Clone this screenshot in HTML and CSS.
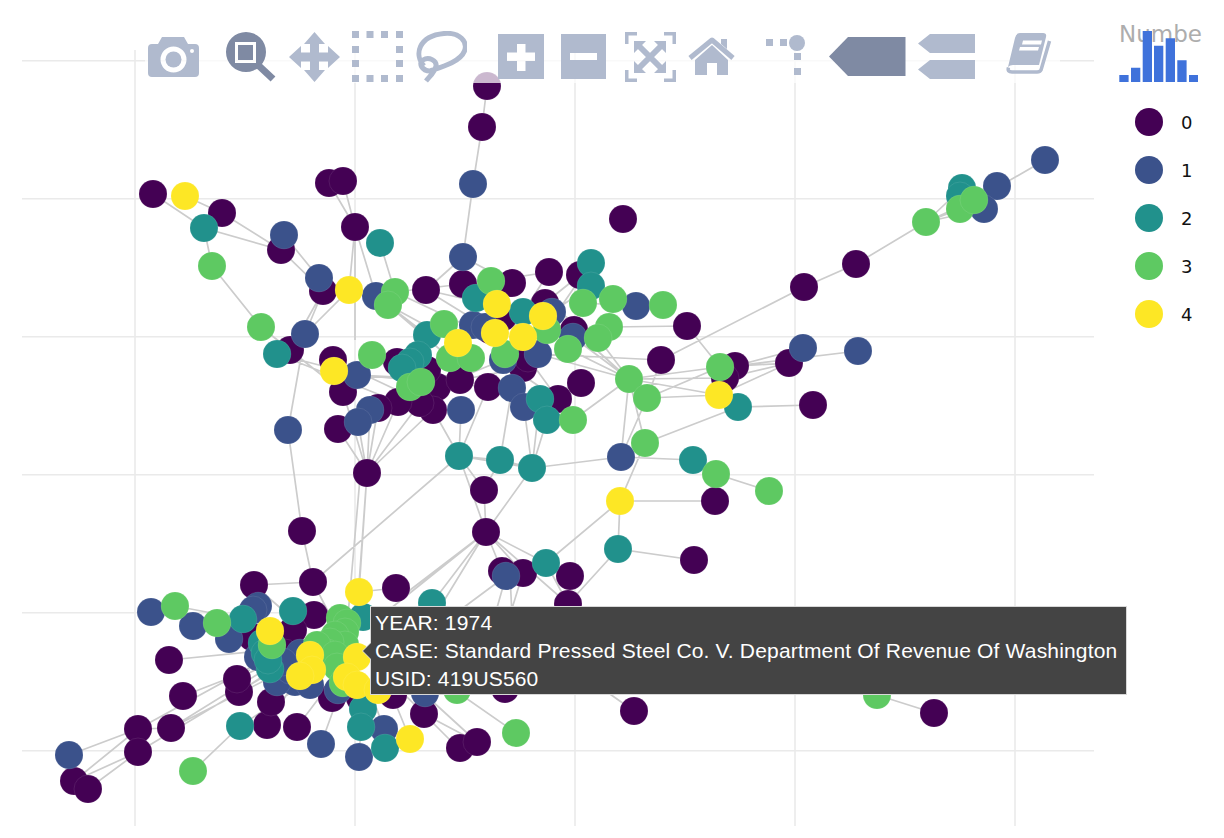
FILE: index.html
```html
<!DOCTYPE html>
<html lang="en">
<head>
<meta charset="utf-8">
<title>Case citation network</title>
<link rel="stylesheet" href="styles.css">
</head>
<body>
<div class="page">
  <main class="plot">
    <svg class="chart" width="1104" height="838" viewBox="0 0 1104 838">
      <path class="grid" d="M22 60.700H1094M22 198.700H1094M22 336.700H1094M22 474.700H1094M22 612.700H1094M22 750.700H1094M135 50V826M355 50V826M575 50V826M795 50V826M1015 50V826"/>
      <path class="edges" d="M487 86L482 127L473 184L463 257L426 290M463 257L463 284M153 194L204 228L281 250M222 213L281 250M185 196L222 213M204 228L212 266M212 266L261 327M281 250L323 291L305 334M319 278L349 290L305 334M284 235L319 278M329 183L355 227M343 181L355 227L376 296M355 227L349 290M355 227L355 340M380 243L395 292M261 327L290 350M305 334L288 430L302 531L313 582M323 291L290 350M277 354L357 375M290 350L343 392M277 354L398 402M372 355L343 392M333 360L418 400M357 375L460 380M357 375L488 387M372 355L460 380M367 473L338 429M367 473L358 422M367 473L370 410M367 473L378 408M367 473L398 402M367 473L420 403M367 473L433 410M367 473L343 392M367 473L359 592M367 473L355 640M360 478L345 650M426 290L491 330M426 290L523 312M395 292L476 330M388 305L427 335M388 305L458 343M388 305L450 358M395 292L463 284M463 257L512 283M463 284L512 283M491 281L549 272M549 272L512 330M580 275L545 303M591 263L545 330M591 286L552 312M583 303L636 306M613 299L663 305M609 327L687 326M574 330L609 327M545 303L598 338M574 330L629 379M598 338L629 379M568 349L629 379M538 354L661 360M538 354L629 379M661 360L804 287L856 264L926 222L960 209L1045 160M926 222L962 188M926 222L984 209M926 222L974 200M687 326L720 367M661 360L647 398M629 379L720 367M629 379L725 378M629 379L719 395M647 398L719 395M647 398L720 367M573 420L629 379M719 395L789 363M735 366L858 351M735 366L803 348M725 378L789 363M720 367L789 363M738 407L813 405M719 395L738 407M645 443L738 407M629 379L645 443M647 398L621 457M629 379L621 457M621 457L645 443M621 457L693 460L716 474L769 491M645 443L620 501L715 501M620 501L618 549L694 560M618 549L568 604M620 501L546 563M433 410L459 456M461 410L459 456M488 387L459 456M459 456L500 460L532 468L621 457M459 456L532 468M512 388L500 460M524 407L532 468M540 399L532 468M547 420L532 468M484 490L459 456M484 490L500 460M486 532L484 490M486 532L532 468M486 532L459 456M459 456L313 582M486 532L397 600M486 532L370 625M486 532L432 603M486 532L420 640M486 532L523 573M486 532L502 571M486 532L546 563M486 532L568 604M510 576L512 615M506 576L440 625M506 576L495 615M523 573L510 615M570 576L568 604M546 563L568 604M396 588L359 592M313 582L254 585M313 582L335 625M254 585L300 625M314 615L293 611M151 612L300 630M175 606L243 619M217 623L300 640M169 660L270 650M183 696L250 670M239 692L310 645M237 679L315 640M138 729L300 640M171 728L300 648M138 752L300 655M171 728L305 660M69 755L138 729M74 781L138 752M88 789L138 752M74 781L138 729M138 729L171 728M193 771L240 726M240 726L310 680M267 725L271 702M267 725L295 682M297 727L325 690M321 744L337 700M361 727L359 757M384 729L370 690M410 739L390 690M458 748L400 690M477 742L420 690M516 733L440 680M424 714L458 748M424 714L477 742M634 711L590 680M877 695L934 713M500 360L558 399M581 383L540 399M558 399L528 358M523 368L460 380M437 387L503 360M573 337L629 379M538 354L512 388"/>
      <g class="nodes c0">
        <circle cx="487" cy="86"/><circle cx="482" cy="127"/><circle cx="153" cy="194"/><circle cx="222" cy="213"/><circle cx="329" cy="183"/><circle cx="343" cy="181"/><circle cx="355" cy="227"/><circle cx="281" cy="250"/><circle cx="623" cy="219"/><circle cx="856" cy="264"/><circle cx="804" cy="287"/><circle cx="323" cy="291"/><circle cx="426" cy="290"/><circle cx="463" cy="284"/><circle cx="512" cy="283"/><circle cx="549" cy="272"/><circle cx="580" cy="275"/><circle cx="545" cy="303"/><circle cx="574" cy="330"/><circle cx="687" cy="326"/><circle cx="661" cy="360"/><circle cx="789" cy="363"/><circle cx="735" cy="366"/><circle cx="725" cy="378"/><circle cx="813" cy="405"/><circle cx="290" cy="350"/><circle cx="333" cy="360"/><circle cx="343" cy="392"/><circle cx="397" cy="362"/><circle cx="420" cy="377"/><circle cx="437" cy="387"/><circle cx="460" cy="380"/><circle cx="488" cy="387"/><circle cx="581" cy="383"/><circle cx="558" cy="399"/><circle cx="433" cy="410"/><circle cx="420" cy="403"/><circle cx="398" cy="402"/><circle cx="378" cy="408"/><circle cx="338" cy="429"/><circle cx="367" cy="473"/><circle cx="523" cy="368"/><circle cx="528" cy="358"/><circle cx="484" cy="490"/><circle cx="715" cy="501"/><circle cx="486" cy="532"/><circle cx="302" cy="531"/><circle cx="694" cy="560"/><circle cx="523" cy="573"/><circle cx="502" cy="571"/><circle cx="570" cy="576"/><circle cx="568" cy="604"/><circle cx="396" cy="588"/><circle cx="313" cy="582"/><circle cx="254" cy="585"/><circle cx="314" cy="615"/><circle cx="293" cy="630"/><circle cx="252" cy="637"/><circle cx="285" cy="653"/><circle cx="169" cy="660"/><circle cx="183" cy="696"/><circle cx="239" cy="692"/><circle cx="237" cy="679"/><circle cx="138" cy="729"/><circle cx="171" cy="728"/><circle cx="138" cy="752"/><circle cx="74" cy="781"/><circle cx="88" cy="789"/><circle cx="267" cy="725"/><circle cx="297" cy="727"/><circle cx="271" cy="702"/><circle cx="332" cy="698"/><circle cx="360" cy="698"/><circle cx="393" cy="695"/><circle cx="424" cy="714"/><circle cx="505" cy="689"/><circle cx="460" cy="748"/><circle cx="477" cy="742"/><circle cx="634" cy="711"/><circle cx="934" cy="713"/><circle cx="503" cy="317"/><circle cx="490" cy="330"/><circle cx="427" cy="370"/>
      </g>
      <g class="nodes c1">
        <circle cx="1045" cy="160"/><circle cx="997" cy="186"/><circle cx="984" cy="209"/><circle cx="473" cy="184"/><circle cx="284" cy="235"/><circle cx="463" cy="257"/><circle cx="319" cy="278"/><circle cx="376" cy="296"/><circle cx="305" cy="334"/><circle cx="636" cy="306"/><circle cx="552" cy="312"/><circle cx="573" cy="337"/><circle cx="803" cy="348"/><circle cx="858" cy="351"/><circle cx="538" cy="354"/><circle cx="503" cy="360"/><circle cx="512" cy="388"/><circle cx="524" cy="407"/><circle cx="461" cy="410"/><circle cx="370" cy="410"/><circle cx="358" cy="422"/><circle cx="288" cy="430"/><circle cx="357" cy="375"/><circle cx="473" cy="325"/><circle cx="485" cy="327"/><circle cx="621" cy="457"/><circle cx="506" cy="576"/><circle cx="151" cy="612"/><circle cx="193" cy="626"/><circle cx="258" cy="606"/><circle cx="253" cy="610"/><circle cx="229" cy="639"/><circle cx="258" cy="657"/><circle cx="300" cy="653"/><circle cx="295" cy="682"/><circle cx="277" cy="682"/><circle cx="290" cy="670"/><circle cx="283" cy="662"/><circle cx="310" cy="685"/><circle cx="338" cy="690"/><circle cx="425" cy="693"/><circle cx="384" cy="729"/><circle cx="321" cy="744"/><circle cx="359" cy="757"/><circle cx="69" cy="755"/>
      </g>
      <g class="nodes c2">
        <circle cx="962" cy="188"/><circle cx="960" cy="196"/><circle cx="204" cy="228"/><circle cx="380" cy="243"/><circle cx="591" cy="263"/><circle cx="591" cy="286"/><circle cx="476" cy="298"/><circle cx="523" cy="312"/><circle cx="427" cy="335"/><circle cx="277" cy="354"/><circle cx="418" cy="355"/><circle cx="410" cy="362"/><circle cx="402" cy="368"/><circle cx="540" cy="399"/><circle cx="547" cy="420"/><circle cx="738" cy="407"/><circle cx="459" cy="456"/><circle cx="500" cy="460"/><circle cx="532" cy="468"/><circle cx="693" cy="460"/><circle cx="618" cy="549"/><circle cx="546" cy="563"/><circle cx="432" cy="603"/><circle cx="243" cy="619"/><circle cx="293" cy="611"/><circle cx="270" cy="669"/><circle cx="262" cy="643"/><circle cx="265" cy="653"/><circle cx="268" cy="660"/><circle cx="363" cy="617"/><circle cx="363" cy="709"/><circle cx="361" cy="727"/><circle cx="240" cy="726"/><circle cx="385" cy="748"/>
      </g>
      <g class="nodes c3">
        <circle cx="926" cy="222"/><circle cx="960" cy="209"/><circle cx="974" cy="200"/><circle cx="212" cy="266"/><circle cx="261" cy="327"/><circle cx="372" cy="355"/><circle cx="395" cy="292"/><circle cx="388" cy="305"/><circle cx="491" cy="281"/><circle cx="444" cy="324"/><circle cx="583" cy="303"/><circle cx="613" cy="299"/><circle cx="663" cy="305"/><circle cx="609" cy="327"/><circle cx="598" cy="338"/><circle cx="568" cy="349"/><circle cx="450" cy="358"/><circle cx="471" cy="358"/><circle cx="505" cy="354"/><circle cx="547" cy="330"/><circle cx="410" cy="387"/><circle cx="421" cy="382"/><circle cx="629" cy="379"/><circle cx="720" cy="367"/><circle cx="647" cy="398"/><circle cx="573" cy="420"/><circle cx="645" cy="443"/><circle cx="716" cy="474"/><circle cx="769" cy="491"/><circle cx="877" cy="695"/><circle cx="516" cy="733"/><circle cx="193" cy="771"/><circle cx="175" cy="606"/><circle cx="217" cy="623"/><circle cx="272" cy="645"/><circle cx="340" cy="618"/><circle cx="347" cy="623"/><circle cx="345" cy="632"/><circle cx="335" cy="635"/><circle cx="345" cy="645"/><circle cx="330" cy="642"/><circle cx="327" cy="653"/><circle cx="317" cy="645"/><circle cx="335" cy="655"/><circle cx="337" cy="667"/><circle cx="343" cy="683"/><circle cx="457" cy="690"/>
      </g>
      <g class="nodes c4">
        <circle cx="185" cy="196"/><circle cx="349" cy="290"/><circle cx="497" cy="304"/><circle cx="543" cy="316"/><circle cx="495" cy="333"/><circle cx="523" cy="337"/><circle cx="458" cy="343"/><circle cx="334" cy="371"/><circle cx="719" cy="395"/><circle cx="620" cy="501"/><circle cx="359" cy="592"/><circle cx="270" cy="631"/><circle cx="310" cy="655"/><circle cx="312" cy="670"/><circle cx="300" cy="676"/><circle cx="357" cy="657"/><circle cx="347" cy="677"/><circle cx="357" cy="685"/><circle cx="378" cy="690"/><circle cx="410" cy="739"/>
      </g>
    </svg>

    <nav class="modebar" aria-label="Plot tools">
      <svg class="tool" width="51" height="52" viewBox="148 31 51 52"><path fill-rule="evenodd" d="M162 37H184L188 44H195Q199 44 199 48V73Q199 77 195 77H152Q148 77 148 73V48Q148 44 152 44H158ZM173.5 46.500A13 13 0 1 0 173.500 72.500A13 13 0 1 0 173.500 46.500ZM192 49A2 2 0 1 0 192 53A2 2 0 1 0 192 49Z"/><circle cx="173.500" cy="59.500" r="8"/></svg>
      <svg class="tool tool-on tool-zoom" width="51" height="52" viewBox="225 31 51 52"><path fill-rule="evenodd" d="M246 32A20 20 0 1 0 246 72A20 20 0 1 0 246 32ZM235 42H256V63H235Z"/><rect x="238" y="45" width="15" height="15"/><path class="tool-line tool-line-on" d="M258 65L273 79"/></svg>
      <svg class="tool tool-pan" width="51" height="52" viewBox="289 31 51 52"><path d="M314.500 32L325 44H319V52.500H328V46L340 57L328 68V61.500H319V70H325L314.500 82L304 70H310V61.500H301V68L289 57L301 46V52.500H310V44H304Z"/></svg>
      <svg class="tool tool-select" width="52" height="52" viewBox="351 31 52 52"><path d="M352 31h7v7h-7zM366.500 31h7v7h-7zM381 31h7v7h-7zM396 31h7v7h-7zM352 46h7v7h-7zM396 46h7v7h-7zM352 60h7v7h-7zM396 60h7v7h-7zM352 75h7v7h-7zM366.500 75h7v7h-7zM381 75h7v7h-7zM396 75h7v7h-7z"/></svg>
      <svg class="tool tool-lasso" width="52" height="52" viewBox="415 31 52 52"><path class="tool-line tool-line-thin" d="M424 66C414 55 418 36 444 33.500C460 32 468 42 464.500 51C460 62 442 67 430 71C422 71 418 63 423 60C429 56 437 61 436 66C435 72 430 76 426 81"/></svg>
      <svg class="tool tool-plus" width="46" height="52" viewBox="498 31 46 52"><path fill-rule="evenodd" d="M498 34H544V79H498ZM517 44V52.500H507V61H517V71H525.500V61H535V52.500H525.500V44Z"/></svg>
      <svg class="tool tool-minus" width="45" height="52" viewBox="561 31 45 52"><path fill-rule="evenodd" d="M561 34H606V79H561ZM570 53V60H597V53Z"/></svg>
      <svg class="tool tool-auto" width="52" height="52" viewBox="624 31 52 52"><path d="M625 32H637V35.500H628.500V44H625ZM676 32H664V35.500H672.500V44H676ZM625 82H637V78.500H628.500V70H625ZM676 82H664V78.500H672.500V70H676ZM634 41H646L634 53ZM666 41H654L666 53ZM634 73H646L634 61ZM666 73H654L666 61Z"/><path class="tool-line tool-line-wide" d="M638 45L662 69M662 45L638 69"/></svg>
      <svg class="tool tool-home" width="47" height="52" viewBox="688 31 47 52"><path d="M721 39H727V49L721 44ZM695 60L712 45L728 60V75H717V63H707V75H695Z"/><path class="tool-line tool-line-thin" d="M690 58L712 40L733 58"/></svg>
      <svg class="tool tool-spike" width="41" height="52" viewBox="765 31 41 52"><path d="M766 39h7v7h-7zM780 39h7v7h-7zM794 53h7v7h-7zM794 68h7v7h-7z"/><circle cx="797" cy="43" r="8"/></svg>
      <svg class="tool tool-on tool-closest" width="77" height="52" viewBox="829 31 77 52"><path d="M829 56.500L848 37H905.500V76H848Z"/></svg>
      <svg class="tool" width="57" height="52" viewBox="918 31 57 52"><path d="M918 43.500L930 34H975V53H930ZM918 69.500L930 60H975V79H930Z"/></svg>
      <svg class="tool tool-book" width="46" height="52" viewBox="1006 31 46 52"><path fill-rule="evenodd" d="M1020 33H1043Q1047 33 1046 37L1039 65H1013Q1010 65 1008 67L1015 38Q1016 33 1020 33ZM1023 40.500L1022 44.500H1041L1042 40.500ZM1020 47L1019 50.500H1038L1039 47Z"/><path class="tool-line tool-line-book" d="M1049.500 41L1041 70Q1040 72 1037 72H1012Q1007 72 1008.500 67.500"/></svg>
    </nav>

    <aside class="hover">
      <p class="hover-line">YEAR: 1974</p>
      <p class="hover-line">CASE: Standard Pressed Steel Co. V. Department Of Revenue Of Washington</p>
      <p class="hover-line">USID: 419US560</p>
    </aside>
  </main>

  <section class="legend">
    <div class="legend-head">
      <div class="legend-title">Number</div>
      <svg class="legend-bars" width="79" height="52" viewBox="1119 30 79 52"><path d="M1119.300 75h9.300v7h-9.300zM1131 67.700h9.300v14.300h-9.300zM1142.700 31h9.300v51h-9.300zM1154 45.700h9.300v36.300h-9.300zM1165.700 38.300h9.300v43.700h-9.300zM1177.300 60.300h9.300v21.700h-9.300zM1189 75h9.300v7h-9.300z"/></svg>
    </div>
    <ul class="legend-list">
      <li class="legend-item"><span class="dot d0"></span>0</li>
      <li class="legend-item"><span class="dot d1"></span>1</li>
      <li class="legend-item"><span class="dot d2"></span>2</li>
      <li class="legend-item"><span class="dot d3"></span>3</li>
      <li class="legend-item"><span class="dot d4"></span>4</li>
    </ul>
  </section>
</div>
</body>
</html>
```
FILE: styles.css
```css
* { box-sizing: border-box; }
html, body { margin: 0; padding: 0; background: #fff; }

.page {
  display: flex;
  width: 1224px;
  height: 838px;
  overflow: hidden;
}

.plot {
  position: relative;
  flex: none;
  width: 1104px;
  height: 838px;
  z-index: 1;
}
.chart { display: block; }

.grid { fill: none; stroke: #eaeaea; stroke-width: 1.6; }
.edges { fill: none; stroke: #ccc; stroke-width: 1.7; }
.nodes circle { r: 14px; stroke: rgba(255, 255, 255, .12); stroke-width: .8; }
.c0 { fill: #440154; }
.c1 { fill: #3b528b; }
.c2 { fill: #21918c; }
.c3 { fill: #5ec962; }
.c4 { fill: #fde725; }

/* toolbar */
.modebar {
  position: absolute;
  left: 145px;
  top: 31px;
  width: 915px;
  height: 52px;
  padding-left: 3px;
  display: flex;
  background: rgba(255, 255, 255, .72);
}
.tool { display: block; flex: none; margin-left: 12px; fill: #b0bace; }
.tool:first-child { margin-left: 0; }
.tool-on { fill: #7f8aa3; }
.tool-zoom { margin-left: 26px; }
.tool-pan { margin-left: 13px; }
.tool-select { margin-left: 11px; }
.tool-plus { margin-left: 31px; }
.tool-minus { margin-left: 17px; }
.tool-auto { margin-left: 18px; }
.tool-spike { margin-left: 30px; }
.tool-closest { margin-left: 23px; }
.tool-book { margin-left: 31px; }
.tool-line { fill: none; stroke: #b0bace; stroke-width: 4; }
.tool-line-on { stroke: #7f8aa3; stroke-width: 7; }
.tool-line-thin { stroke-width: 5; stroke-linejoin: round; }
.tool-line-wide { stroke-width: 6; }
.tool-line-book { stroke-width: 3.500; }

/* hover label */
.hover {
  position: absolute;
  left: 370px;
  top: 606px;
  width: 757px;
  height: 89px;
  padding: 2px 4px;
  background: #444;
  border: 1px solid #d8d8d8;
  color: #fff;
  font: 21px/28px "Liberation Sans", Arial, sans-serif;
  letter-spacing: .17px;
  white-space: nowrap;
}
.hover::before,
.hover::after {
  content: "";
  position: absolute;
  clip-path: polygon(100% 0, 0 50%, 100% 100%);
}
.hover::before {
  left: -9px;
  top: 35px;
  width: 9px;
  height: 18px;
  background: #d8d8d8;
}
.hover::after {
  left: -8px;
  top: 36px;
  width: 8px;
  height: 16px;
  background: #444;
}
.hover-line { margin: 0; }

/* legend */
.legend {
  flex: 1;
  padding: 0 0 0 15px;
  font-family: "DejaVu Sans", Verdana, sans-serif;
}
.legend-head {
  position: relative;
  height: 98px;
  padding-top: 20px;
}
.legend-title {
  width: 84px;
  overflow: hidden;
  color: #adadad;
  font-size: 23px;
  line-height: 28px;
  white-space: nowrap;
}
.legend-bars {
  position: absolute;
  left: 0;
  top: 30px;
  fill: #3f72db;
}
.legend-list { list-style: none; margin: 0; padding: 0 0 0 16px; }
.legend-item {
  display: flex;
  align-items: center;
  gap: 18px;
  height: 48px;
  color: #111;
  font-size: 18px;
}
.dot { width: 28px; height: 28px; border-radius: 50%; flex: none; }
.d0 { background: #440154; }
.d1 { background: #3b528b; }
.d2 { background: #21918c; }
.d3 { background: #5ec962; }
.d4 { background: #fde725; }
```
